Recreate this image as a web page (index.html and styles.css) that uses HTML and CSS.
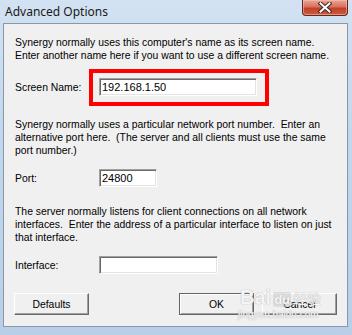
FILE: index.html
```html
<!doctype html>
<html lang=en>
<head>
<meta charset=utf-8>
<title>Advanced Options</title>
<link rel="stylesheet" href="styles.css">
</head>
<body>

<div class="window">

	<!-- title bar -->
	<div class="titlebar">
		<span class="title">Advanced Options</span>
		<span class="close">
			<svg width="14" height="11" viewBox="0 0 14 11">
				<path d="M2.5 1.5 L11.5 9.5 M11.5 1.5 L2.5 9.5" stroke="#3a2a2a" stroke-width="4" stroke-linecap="square"/>
				<path d="M2.5 1.5 L11.5 9.5 M11.5 1.5 L2.5 9.5" stroke="#ffffff" stroke-width="2" stroke-linecap="square"/>
			</svg>
		</span>
	</div>

	<!-- dialog body -->
	<div class="client">
		<p class="note">Synergy normally uses this computer's name as its screen name.<br>Enter another name here if you want to use a different screen name.</p>

		<div class="row first">
			<label class="label">Screen Name:</label>
			<span class="marked"><input class="field wide" value="192.168.1.50"></span>
		</div>

		<p class="note gap">Synergy normally uses a particular network port number.&nbsp; Enter an<br>alternative port here.&nbsp; (The server and all clients must use the same<br>port number.)</p>

		<div class="row">
			<label class="label">Port:</label>
			<input class="field short" value="24800">
		</div>

		<p class="note gap-small">The server normally listens for client connections on all network<br>interfaces.&nbsp; Enter the address of a particular interface to listen on just<br>that interface.</p>

		<div class="row">
			<label class="label">Interface:</label>
			<input class="field mid" value="">
		</div>

		<div class="buttons">
			<button class="btn defaults">Defaults</button>
			<button class="btn ok">OK</button>
			<button class="btn">Cancel</button>
		</div>

		<!-- watermark over the buttons -->
		<div class="watermark">
			<span class="wm-big">Bai</span><span class="wm-box">du</span><span class="wm-cn">经验</span>
			<span class="wm-url">jingyan.baidu.com</span>
		</div>
	</div>

</div>

</body>
</html>
```
FILE: styles.css
```css
/* ====  Window frame  ==== */

html, body {
	margin:   0;
	height:   100%;
	overflow: hidden;
}

body {
	width:      352px;
	height:     335px;
	background: linear-gradient(180deg, #d2e2f2 0%, #c3d7ec 40%, #b8cfe7 100%);
	font-family: "Liberation Sans", Arial, sans-serif;
	font-size:  10.4px;
	color:      #000;
}

.window {
	display:        flex;
	flex-direction: column;
	height:         335px;
}

.titlebar {
	display:     flex;
	align-items: flex-start;
	height:      23px;
	padding:     0 4px 0 5px;
	box-sizing:  border-box;
}

.title {
	font-family: "Noto Sans", "Open Sans", sans-serif;
	font-size:   12px;
	color:       #1a1a1a;
	margin-top:  3px;
}

.close {
	margin-left:   auto;
	width:         44px;
	height:        15px;
	display:       flex;
	align-items:   center;
	justify-content: center;
	background:    linear-gradient(180deg, #e9a593 0%, #d8735d 45%, #c2402a 55%, #cf5a3f 100%);
	border:        1px solid #5e2a22;
	border-top:    0;
	border-radius: 0 0 4px 4px;
	box-shadow:    inset 0 0 0 1px rgba(255, 200, 190, 0.5);
}

.client {
	position:   relative;
	margin:     0 4px 0 3px;
	height:     304px;
	box-sizing: border-box;
	padding:    12px 10px 0 11px;
	background: #f0f0f0;
	border:     1px solid #8898ab;
}


/* ====  Dialog content  ==== */

.note {
	margin:      0;
	line-height: 13px;
	white-space: nowrap;
}

.note.gap {
	margin-top: 22px;
}

.note.gap-small {
	margin-top: 18px;
}

.row {
	display:     flex;
	align-items: center;
	margin-top:  12px;
	height:      18px;
}

.row.first {
	margin-top: 16px;
}

.label {
	width: 84px;
}

.field {
	height:      18px;
	box-sizing:  border-box;
	padding:     0 0 0 2px;
	font-family: "Liberation Sans", Arial, sans-serif;
	font-size:   11px;
	color:       #000;
	background:  #fff;
	outline:     0;
	border-top:    1px solid #a0a0a0;
	border-left:   1px solid #a0a0a0;
	border-bottom: 1px solid #fff;
	border-right:  1px solid #fff;
	box-shadow:    inset 1px 1px 0 #696969, inset -1px -1px 0 #e3e3e3;
}

.field.wide  { width: 158px; }
.field.short { width: 58px; }
.field.mid   { width: 119px; }

/* red annotation around the screen name box */
.marked {
	position: relative;
	display:  flex;
}

.marked::after {
	content:  "";
	position: absolute;
	left:   -10px;
	right:  -12px;
	top:    -9px;
	bottom: -10px;
	border: 4px solid #ff0000;
	pointer-events: none;
}

.buttons {
	display:     flex;
	margin-top:  19px;
	margin-left: -1px;
}

.btn {
	width:       75px;
	height:      22px;
	padding:     0;
	font-family: "Liberation Sans", Arial, sans-serif;
	font-size:   10.4px;
	color:       #000;
	background:  #f0f0f0;
	border-top:    1px solid #fff;
	border-left:   1px solid #fff;
	border-bottom: 1px solid #696969;
	border-right:  1px solid #696969;
	box-shadow:    inset -1px -1px 0 #a0a0a0;
}

.btn.ok {
	margin-left:  auto;
	margin-right: 8px;
	border:       1px solid #646464;
	box-shadow:   inset 1px 1px 0 #fff, inset -1px -1px 0 #a0a0a0;
}


/* ====  Watermark  ==== */

.watermark {
	position:    absolute;
	left:        236px;
	top:         262px;
	width:       110px;
	color:       rgba(255, 255, 255, 0.85);
	text-shadow: 0 0 1px #b9b9b9, 0 0 1px #b9b9b9;
	white-space: nowrap;
	pointer-events: none;
}

.wm-big {
	font-family: "Liberation Sans", Arial, sans-serif;
	font-size:   20px;
	font-weight: bold;
}

.wm-box {
	display:       inline-block;
	margin-left:   2px;
	padding:       0 1px;
	font-size:     13px;
	font-weight:   bold;
	background:    rgba(200, 200, 200, 0.5);
	border-radius: 2px;
}

.wm-cn {
	font-family: "Noto Sans CJK SC", sans-serif;
	font-size:   14px;
	margin-left: 2px;
}

.wm-url {
	display:     block;
	margin-left: -2px;
	font-size:   10px;
	line-height: 11px;
}
```
